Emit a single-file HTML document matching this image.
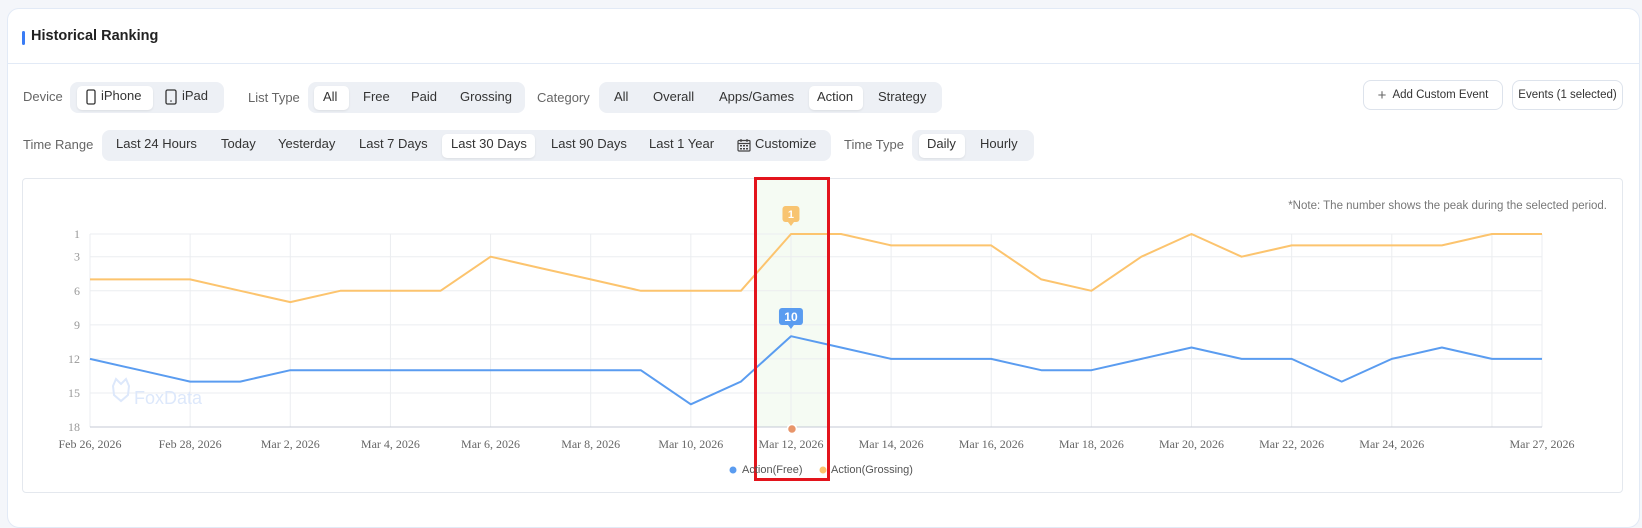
<!DOCTYPE html>
<html><head><meta charset="utf-8"><style>
*{box-sizing:border-box;margin:0;padding:0}
body{width:1642px;height:512px;background:#f4f6fa;font-family:"Liberation Sans",sans-serif;position:relative;overflow:hidden;color:#333}
.card{position:absolute;left:7px;top:8px;width:1633px;height:520px;background:#fff;border:1px solid #e2eaf6;border-radius:12px}
.abs{position:absolute;white-space:nowrap}
.lbl{font-size:13px;color:#666}
.grp{position:absolute;background:#edf0f5;border-radius:8px}
.it{position:absolute;font-size:13px;color:#333;white-space:nowrap}
.sel{position:absolute;background:#fff;border-radius:5px;box-shadow:0 1px 2px rgba(0,0,0,.08)}
.btn{position:absolute;border:1px solid #dde3ec;border-radius:8px;background:#fff;font-size:11.5px;color:#333;display:flex;align-items:center;justify-content:center}
</style></head><body>
<div class="card"></div>
<div class="abs" style="left:22px;top:31px;width:3px;height:14px;background:#3a7cf5;border-radius:2px"></div>
<div class="abs" style="left:31px;top:28px;font-size:14.5px;font-weight:bold;color:#222">Historical Ranking</div>
<div class="abs" style="left:8px;top:63px;width:1631px;height:1px;background:#e2eaf6"></div>

<div class="abs lbl" style="left:23px;top:89px">Device</div>
<div class="grp" style="left:70px;top:82px;width:154px;height:31px"></div>
<div class="sel" style="left:77px;top:86px;width:76px;height:24px"></div>
<svg class="abs" style="left:86px;top:89px" width="10" height="16"><rect x="1" y="1" width="8" height="14" rx="1.5" fill="none" stroke="#333" stroke-width="1.3"/></svg>
<div class="it" style="left:101px;top:88px">iPhone</div>
<svg class="abs" style="left:165px;top:89px" width="12" height="16"><rect x="1" y="1" width="10" height="14" rx="1.5" fill="none" stroke="#333" stroke-width="1.3"/><circle cx="6" cy="12" r=".8" fill="#333"/></svg>
<div class="it" style="left:182px;top:88px">iPad</div>

<div class="abs lbl" style="left:248px;top:90px">List Type</div>
<div class="grp" style="left:308px;top:82px;width:217px;height:31px"></div>
<div class="sel" style="left:314px;top:86px;width:35px;height:24px"></div>
<div class="it" style="left:323px;top:89px">All</div>
<div class="it" style="left:363px;top:89px">Free</div>
<div class="it" style="left:411px;top:89px">Paid</div>
<div class="it" style="left:460px;top:89px">Grossing</div>

<div class="abs lbl" style="left:537px;top:90px">Category</div>
<div class="grp" style="left:599px;top:82px;width:343px;height:31px"></div>
<div class="it" style="left:614px;top:89px">All</div>
<div class="it" style="left:653px;top:89px">Overall</div>
<div class="it" style="left:719px;top:89px">Apps/Games</div>
<div class="sel" style="left:809px;top:86px;width:54px;height:24px"></div>
<div class="it" style="left:817px;top:89px">Action</div>
<div class="it" style="left:878px;top:89px">Strategy</div>

<div class="btn" style="left:1363px;top:80px;width:140px;height:30px"><span style="font-size:15px;color:#666;margin-right:6px">+</span>Add Custom Event</div>
<div class="btn" style="left:1512px;top:80px;width:111px;height:30px">Events (1 selected)</div>

<div class="abs lbl" style="left:23px;top:137px">Time Range</div>
<div class="grp" style="left:102px;top:130px;width:729px;height:31px"></div>
<div class="it" style="left:116px;top:136px">Last 24 Hours</div>
<div class="it" style="left:221px;top:136px">Today</div>
<div class="it" style="left:278px;top:136px">Yesterday</div>
<div class="it" style="left:359px;top:136px">Last 7 Days</div>
<div class="sel" style="left:442px;top:134px;width:93px;height:24px"></div>
<div class="it" style="left:451px;top:136px">Last 30 Days</div>
<div class="it" style="left:551px;top:136px">Last 90 Days</div>
<div class="it" style="left:649px;top:136px">Last 1 Year</div>
<svg class="abs" style="left:737px;top:138px" width="14" height="14"><rect x="1" y="2.5" width="12" height="10.5" rx="1" fill="none" stroke="#444" stroke-width="1.2"/><line x1="1" y1="5.5" x2="13" y2="5.5" stroke="#444" stroke-width="1.2"/><line x1="4" y1="1" x2="4" y2="4" stroke="#444" stroke-width="1.2"/><line x1="10" y1="1" x2="10" y2="4" stroke="#444" stroke-width="1.2"/><g fill="#444"><rect x="3" y="7" width="2" height="1.5"/><rect x="6" y="7" width="2" height="1.5"/><rect x="9" y="7" width="2" height="1.5"/><rect x="3" y="10" width="2" height="1.5"/><rect x="6" y="10" width="2" height="1.5"/><rect x="9" y="10" width="2" height="1.5"/></g></svg>
<div class="it" style="left:755px;top:136px">Customize</div>

<div class="abs lbl" style="left:844px;top:137px">Time Type</div>
<div class="grp" style="left:912px;top:130px;width:122px;height:31px"></div>
<div class="sel" style="left:919px;top:134px;width:46px;height:24px"></div>
<div class="it" style="left:927px;top:136px">Daily</div>
<div class="it" style="left:980px;top:136px">Hourly</div>

<div class="abs" style="left:22px;top:178px;width:1601px;height:315px;border:1px solid #e4e8ee;border-radius:4px"></div>
<div class="abs" style="right:35px;top:200px;font-size:11.5px;color:#777">*Note: The number shows the peak during the selected period.</div>

<svg id="ch" class="abs" style="left:0;top:0" width="1642" height="512"></svg>
<div class="abs" style="left:742px;top:464px;font-size:11px;color:#555">Action(Free)</div>
<div class="abs" style="left:831px;top:464px;font-size:11px;color:#555">Action(Grossing)</div>
<script>
var X0=90,X1=1542,Y1=234,YS=11.353,N=29;
function x(i){return X0+i*(X1-X0)/N}
function y(r){return Y1+(r-1)*YS}
var s='';
s+='<rect x="756" y="179" width="72" height="248" fill="#f5fbf3"/>';
[1,3,6,9,12,15,18].forEach(function(r){s+='<line x1="'+X0+'" x2="'+X1+'" y1="'+y(r)+'" y2="'+y(r)+'" stroke="#ebedf0"/>';
s+='<text x="80" y="'+(y(r)+4)+'" font-family="Liberation Serif,serif" font-size="12" fill="#999" text-anchor="end">'+r+'</text>';});
var lab=['Feb 26, 2026','','Feb 28, 2026','','Mar 2, 2026','','Mar 4, 2026','','Mar 6, 2026','','Mar 8, 2026','','Mar 10, 2026','','Mar 12, 2026','','Mar 14, 2026','','Mar 16, 2026','','Mar 18, 2026','','Mar 20, 2026','','Mar 22, 2026','','Mar 24, 2026','','',''];
lab[29]='Mar 27, 2026';
for(var i=0;i<=29;i++){if(i%2==0||i==29){s+='<line x1="'+x(i)+'" x2="'+x(i)+'" y1="'+y(1)+'" y2="'+y(18)+'" stroke="#ebedf0"/>';}
if(lab[i])s+='<text x="'+x(i)+'" y="448" font-family="Liberation Serif,serif" font-size="12" fill="#666" text-anchor="middle">'+lab[i]+'</text>';}
s+='<line x1="'+X0+'" x2="'+X1+'" y1="'+y(18)+'" y2="'+y(18)+'" stroke="#c4cad4"/>';
var o=[5,5,5,6,7,6,6,6,3,4,5,6,6,6,1,1,2,2,2,5,6,3,1,3,2,2,2,2,1,1];
var b=[12,13,14,14,13,13,13,13,13,13,13,13,16,14,10,11,12,12,12,13,13,12,11,12,12,14,12,11,12,12];
function pl(a,c){return '<polyline fill="none" stroke="'+c+'" stroke-width="2" stroke-linejoin="round" points="'+a.map(function(r,i){return x(i).toFixed(1)+','+y(r).toFixed(1)}).join(' ')+'"/>'}
s+='<text x="134" y="404" font-size="18" fill="#dde8fb" font-family="Liberation Sans,sans-serif">FoxData</text>';
s+='<path d="M113 386 l3 -7 l5 5 l5 -5 l3 7 l-1 9 l-7 6 l-7 -6z" fill="none" stroke="#dde8fb" stroke-width="2"/>';
s+=pl(o,'#fcc46e')+pl(b,'#5a9cf0');
var mx=x(14);
s+='<rect x="'+(mx-8.5)+'" y="206" width="17" height="16" rx="3" fill="#f8c471"/><path d="M'+(mx-3)+' 222 l3 4 l3 -4z" fill="#f8c471"/><text x="'+mx+'" y="218" font-size="11" font-weight="bold" fill="#fff" text-anchor="middle">1</text>';
s+='<rect x="'+(mx-12)+'" y="308" width="24" height="17" rx="3" fill="#5a9cf0"/><path d="M'+(mx-3)+' 325 l3 4 l3 -4z" fill="#5a9cf0"/><text x="'+mx+'" y="321" font-size="12" font-weight="bold" fill="#fff" text-anchor="middle">10</text>';
s+='<circle cx="'+(mx+1)+'" cy="429" r="4.5" fill="#e8956a" stroke="#fff" stroke-width="1.5"/>';
s+='<rect x="755.5" y="178.5" width="73" height="301" fill="none" stroke="#e3141c" stroke-width="3"/>';
s+='<circle cx="733" cy="470" r="3.5" fill="#5a9cf0"/><circle cx="823" cy="470" r="3.5" fill="#fcc46e"/>';
document.getElementById('ch').innerHTML=s;
</script>
</body></html>
